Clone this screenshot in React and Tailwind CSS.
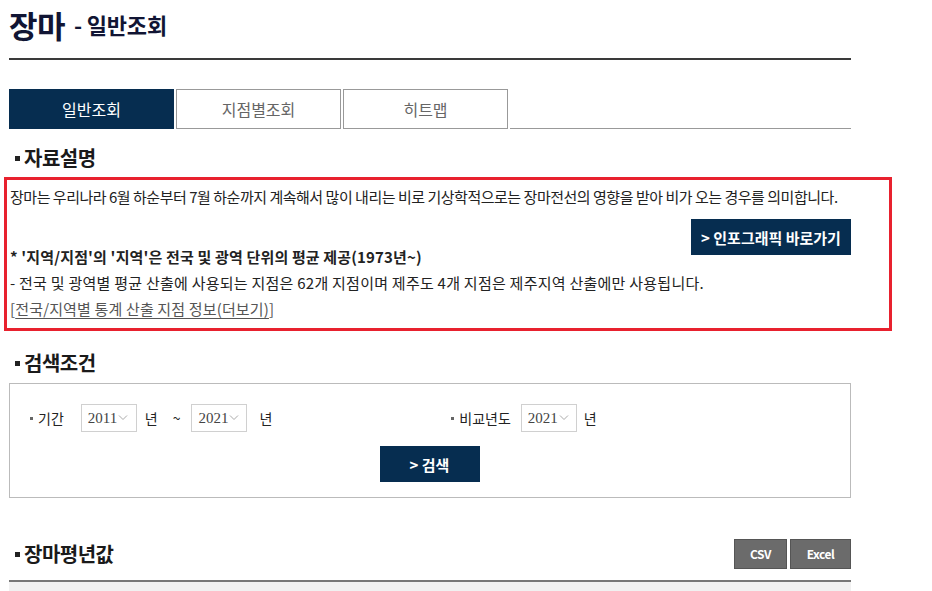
import { useState } from "react";

const KR = { fontFamily: '"Noto Sans CJK KR", "Noto Sans", sans-serif' };

/* ---------- small pieces ---------- */

function Heading({ children, className = "" }) {
  return (
    <div className={`flex items-center h-[30px] ${className}`}>
      <span className="w-[5px] h-[5px] bg-[#222] ml-[6px] mr-[4px]" />
      <h3 className="text-[20px] font-bold text-[#1a1a1a] leading-none tracking-[-0.5px]">
        {children}
      </h3>
    </div>
  );
}

function YearSelect({ value }) {
  return (
    <div className="flex items-center h-[28px] w-[56px] border border-[#d0d0d0] pl-[6px] gap-[1px] bg-white">
      <span
        className="text-[15px] text-[#444] leading-none"
        style={{ fontFamily: '"Liberation Serif", serif' }}
      >
        {value}
      </span>
      <svg width="10" height="7" viewBox="0 0 10 7" className="mt-[-2px]">
        <path d="M1 1.5 L5 5.5 L9 1.5" fill="none" stroke="#aaa" strokeWidth="1" />
      </svg>
    </div>
  );
}

function Label({ children }) {
  return (
    <div className="flex items-center">
      <span className="w-[3px] h-[3px] bg-[#666] mr-[5px]" />
      <span className="text-[14px] text-[#222]">{children}</span>
    </div>
  );
}

export default function App() {
  const [tab, setTab] = useState(0);
  const tabs = ["일반조회", "지점별조회", "히트맵"];

  return (
    <div className="w-[932px] h-[591px] overflow-hidden bg-white" style={KR}>
      <div className="ml-[9px] w-[842px]">
        {/* TITLE */}
        <div className="h-[60px] pb-[10px] flex items-center border-b-2 border-[#3a3a3a]">
          <h1 className="text-[31px] font-bold text-[#111534] leading-none tracking-[-0.5px]">
            장마
          </h1>
          <span className="text-[22px] font-bold text-[#111534] leading-none ml-[9px] tracking-[-0.2px]">
            - 일반조회
          </span>
        </div>

        {/* TABS */}
        <div className="flex mt-[29px] h-[40px]">
          {tabs.map((t, i) => (
            <button
              key={t}
              onClick={() => setTab(i)}
              className={
                i === tab
                  ? "w-[165px] h-[40px] bg-[#062d50] text-white text-[16px] mr-[2px]"
                  : "w-[165px] h-[40px] border border-[#999] text-[#666] text-[16px] mr-[2px]"
              }
            >
              {t}
            </button>
          ))}
          <div className="flex-1 border-b border-[#999]" />
        </div>

        {/* 자료설명 */}
        <Heading className="mt-[14px]">자료설명</Heading>

        <div className="mt-[4px] -ml-[5px] w-[888px] h-[154px] border-[3px] border-[#e8212e] pt-[4px] pl-[3px]">
          <div className="w-[841px] text-[15px] text-[#222] leading-[26px]">
            <p className="tracking-[-0.48px]">
              장마는 우리나라 6월 하순부터 7월 하순까지 계속해서 많이 내리는 비로 기상학적으로는 장마전선의 영향을 받아 비가 오는 경우를 의미합니다.
            </p>
            <div className="flex justify-end items-start h-[34px]">
              <button className="mt-[9px] w-[160px] h-[36px] bg-[#062d50] text-white text-[15px] font-bold leading-none shrink-0">
                &gt; 인포그래픽 바로가기
              </button>
            </div>
            <p className="font-bold tracking-[0.15px]">
              * '지역/지점'의 '지역'은 전국 및 광역 단위의 평균 제공(1973년~)
            </p>
            <p className="tracking-[0.25px]">
              - 전국 및 광역별 평균 산출에 사용되는 지점은 62개 지점이며 제주도 4개 지점은 제주지역 산출에만 사용됩니다.
            </p>
            <p className="text-[#555] tracking-[0.15px]">
              [<span className="underline underline-offset-[3px]">전국/지역별 통계 산출 지점 정보(더보기)</span>]
            </p>
          </div>
        </div>

        {/* 검색조건 */}
        <Heading className="mt-[17px]">검색조건</Heading>

        <div className="mt-[5px] h-[115px] border border-[#bbb] pt-[20px]">
          <div className="flex items-center h-[28px] pl-[20px]">
            <Label>기간</Label>
            <div className="ml-[17px]">
              <YearSelect value="2011" />
            </div>
            <span className="ml-[8px] text-[14px] text-[#222]">년</span>
            <span className="ml-[15px] text-[14px] text-[#222]">~</span>
            <div className="ml-[11px]">
              <YearSelect value="2021" />
            </div>
            <span className="ml-[12px] text-[14px] text-[#222]">년</span>
            <div className="ml-[179px]">
              <Label>비교년도</Label>
            </div>
            <div className="ml-[10px]">
              <YearSelect value="2021" />
            </div>
            <span className="ml-[7px] text-[14px] text-[#222]">년</span>
          </div>
          <div className="flex justify-center mt-[14px] pr-[1px]">
            <button className="w-[100px] h-[36px] bg-[#062d50] text-white text-[15px] font-bold leading-none">
              &gt; 검색
            </button>
          </div>
        </div>

        {/* 장마평년값 */}
        <div className="mt-[41px] h-[30px] flex items-center justify-between">
          <Heading>장마평년값</Heading>
          <div className="flex gap-[3px]">
            <button className="w-[53px] h-[30px] bg-[#6b6b6b] border border-[#555] text-white text-[12px] font-bold tracking-[-0.5px]">
              CSV
            </button>
            <button className="w-[61px] h-[30px] bg-[#6b6b6b] border border-[#555] text-white text-[12px] font-bold tracking-[-0.5px]">
              Excel
            </button>
          </div>
        </div>

        <div className="mt-[11px] border-t-2 border-[#777] h-[40px] bg-[#f1f1f1]" />
      </div>
    </div>
  );
}
